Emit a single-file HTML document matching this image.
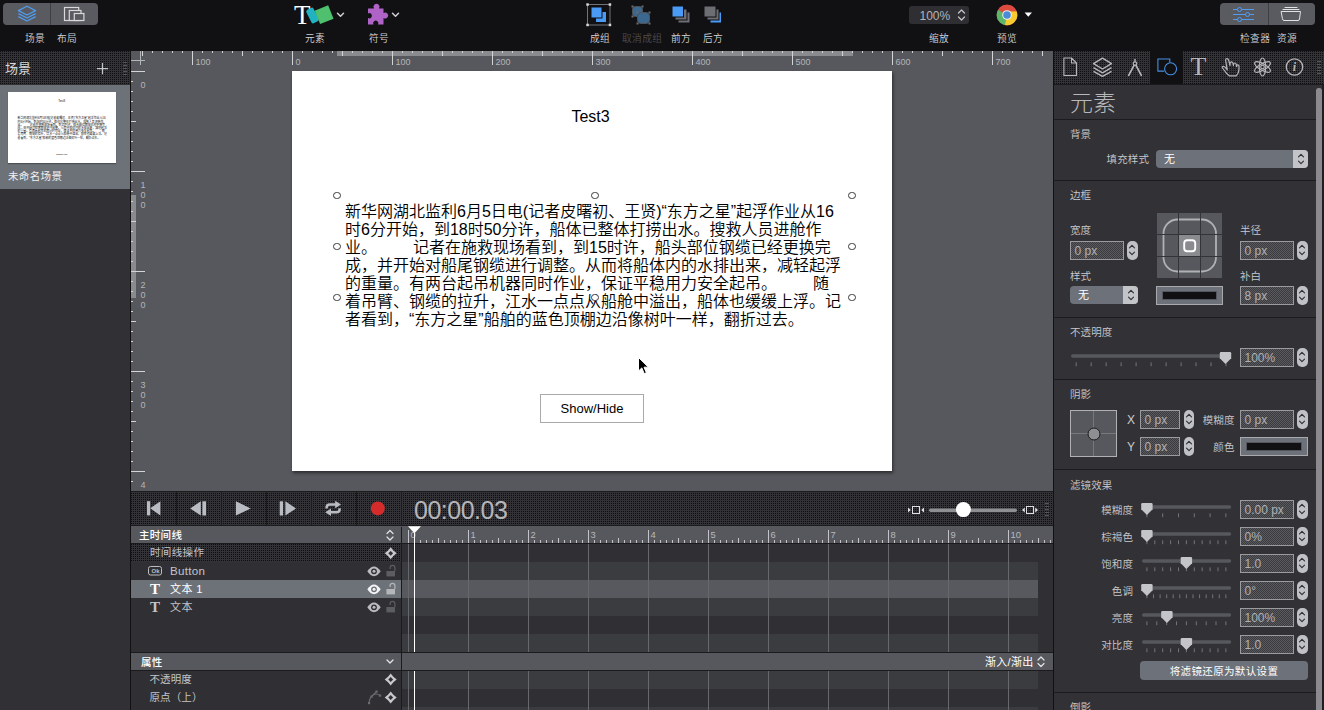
<!DOCTYPE html>
<html lang="zh-CN">
<head>
<meta charset="utf-8">
<title>Hype</title>
<style>
html,body{margin:0;padding:0;}
body{width:1324px;height:710px;overflow:hidden;background:#111114;position:relative;
 font-family:"Liberation Sans","Noto Sans CJK SC",sans-serif;font-size:11px;color:#e6e6e8;}
.a{position:absolute;}
.dot{background-color:#333337;background-image:linear-gradient(90deg,transparent 50%,#333337 50%),linear-gradient(180deg,#0d0d0f 50%,#333337 50%);background-size:2px 2px;}
#toolbar{left:0;top:0;width:1324px;height:51px;background:#111114;}
.seg{background:#5a5b60;border-radius:4px;height:22px;top:3px;}
.tl{font-weight:350;top:32.3px;height:14px;line-height:14px;font-size:9.7px;color:#d4d4d8;white-space:nowrap;letter-spacing:0.4px;}
#left{left:0;top:51px;width:130px;height:659px;background:#313135;}
#lefthead{left:0;top:0;width:130px;height:34px;}
#scene{left:0;top:34px;width:130px;height:104px;background:#6d7279;}
#thumb .btn{border-color:transparent !important;}
#thumb{left:8px;top:7.4px;width:108px;height:71px;background:#fff;box-shadow:0 1px 1px rgba(0,0,0,.3);overflow:hidden;}
#stage{left:131px;top:51px;width:922px;height:440px;background:#57585d;overflow:hidden;}
#doc{left:161px;top:20px;width:600px;height:400px;background:#fff;box-shadow:1px 2px 3px rgba(0,0,0,.5);}
.rl{font-size:9px;color:#b4b5b8;line-height:10px;}
.ln{position:absolute;white-space:nowrap;font-size:16px;line-height:18px;color:#000;left:53px;font-weight:350;}
.ln i{display:inline-block;height:1px;}
.hd{position:absolute;width:5.4px;height:5.4px;border-radius:50%;border:1px solid #3a3a3a;background:#fff;margin:-3.2px 0 0 -3.7px;}
#transport{left:131px;top:491px;width:922px;height:35px;}
.tb{top:1px;width:44px;height:34px;border-right:1px solid #1b1b1e;}
#timeline{left:131px;top:527px;width:922px;height:183px;background:#303034;}
.th{background:#57585d;height:16px;left:0;width:922px;}
.row{left:0;width:270px;height:18px;line-height:18px;font-size:10.5px;color:#c8c8cc;white-space:nowrap;}
#insp{left:1054px;top:51px;width:270px;height:659px;background:#323236;overflow:hidden;}
.lab{font-weight:350;font-size:10.5px;line-height:14px;color:#cacace;white-space:nowrap;letter-spacing:0.1px;}
.sep{left:0;width:262px;height:1px;background:#1c1c1f;}
.inp{height:17px;border:1px solid #9b9ca0;font-size:12px;line-height:18.9px;color:#b0b0b4;padding-left:3.5px;box-sizing:content-box;
 background-color:#4a4b4f;background-image:linear-gradient(45deg,#3b3b3f 25%,transparent 25%,transparent 75%,#3b3b3f 75%),linear-gradient(45deg,#3b3b3f 25%,#5a5b5f 25%,#5a5b5f 75%,#3b3b3f 75%);background-size:2px 2px;background-position:0 0,1px 1px;}
.stp{width:10.5px;height:18.5px;border-radius:5px;background:#bfc1c6;}
.sel{background:#6d7179;border-radius:4px;height:18px;line-height:18px;color:#fff;font-size:11px;}
.well{border:1px solid #a8a9ad;background:#6d7179;box-sizing:border-box;}
.well i{position:absolute;left:5px;top:4px;right:5px;bottom:4px;background:#111114;border:1px solid #54575d;box-sizing:border-box;}
.grip{width:4px;height:1px;background:#55565a;box-shadow:0 3px 0 #55565a,0 6px 0 #55565a,0 9px 0 #55565a,0 12px 0 #55565a;}
</style>
</head>
<body>
<div id="toolbar" class="a">
<div class="a seg" style="left:3px;width:95px;"></div>
<div class="a" style="left:50px;top:3px;width:1px;height:22px;background:#3e3f43;"></div>
<svg class="a" style="left:3px;top:3px" width="95" height="22" viewBox="0 0 95 22">
 <g fill="none" stroke="#4f9cf0" stroke-width="1.2" stroke-linejoin="round">
  <path d="M24 3.2 L32.6 7.6 L24 12 L15.4 7.6 Z"/>
  <path d="M15.4 10.6 L24 15 L32.6 10.6"/>
  <path d="M15.4 13.6 L24 18 L32.6 13.6"/>
 </g>
 <g fill="none" stroke="#d9d9dc" stroke-width="1.2">
  <rect x="61.5" y="4.5" width="14.2" height="13"/>
  <rect x="66.3" y="7.5" width="11.7" height="10" fill="#5a5b60"/>
  <rect x="71.3" y="10.5" width="9.6" height="7" fill="#5a5b60"/>
 </g>
</svg>
<div class="a tl" style="left:25px;">场景</div>
<div class="a tl" style="left:57px;">布局</div>

<div class="a" style="left:294px;top:0px;font-family:'Liberation Serif',serif;font-size:27px;line-height:30px;color:#fff;">T</div>
<svg class="a" style="left:300px;top:0" width="50" height="30" viewBox="0 0 50 30">
 <rect x="8.5" y="8" width="8" height="15" rx="2" fill="#22b3c2" transform="rotate(-27 12.5 15.5)"/>
 <rect x="17" y="7.5" width="14.5" height="14.5" fill="#4fc16e" transform="rotate(-22 24 15)"/>
 <path d="M37.5 13.2 L40.5 16.2 L43.5 13.2" fill="none" stroke="#d0d0d3" stroke-width="1.5" stroke-linecap="round" stroke-linejoin="round"/>
</svg>
<div class="a tl" style="left:305px;">元素</div>

<svg class="a" style="left:366px;top:2px" width="40" height="26" viewBox="0 0 40 26">
 <path d="M2 6.5 H8 A3 3 0 1 1 13 6.5 H17.5 V11 A3 3 0 1 1 17.5 16 V22.5 H12 A2.6 2.6 0 1 0 7.5 22.5 H2 V16 A2.6 2.6 0 1 0 2 11.5 Z" fill="#b063c6"/>
 <path d="M26.5 11.2 L29.5 14.2 L32.5 11.2" fill="none" stroke="#d0d0d3" stroke-width="1.5" stroke-linecap="round" stroke-linejoin="round"/>
</svg>
<div class="a tl" style="left:369px;">符号</div>

<svg class="a" style="left:585px;top:2px" width="140" height="26" viewBox="0 0 140 26">
 <rect x="2.5" y="2.5" width="22.5" height="20.5" fill="none" stroke="#737478" stroke-width="1"/>
 <g fill="#d8d8db"><rect x="1.3" y="1.3" width="2.5" height="2.5"/><rect x="23.7" y="1.3" width="2.5" height="2.5"/><rect x="1.3" y="21.7" width="2.5" height="2.5"/><rect x="23.7" y="21.7" width="2.5" height="2.5"/></g>
 <rect x="10.5" y="9.5" width="11" height="11" fill="#4a9bf5" stroke="#111114" stroke-width="1"/>
 <rect x="6" y="5" width="11" height="11" fill="#4a9bf5" stroke="#111114" stroke-width="1"/>
 <g fill="#3c678f" stroke="#4e5358" stroke-width="1"><rect x="47.5" y="4.5" width="10" height="10" rx="3"/><rect x="52.5" y="10.5" width="12" height="11" rx="3.5"/></g>
 <g fill="#6a6c70"><rect x="46.5" y="3.5" width="2" height="2"/><rect x="56.5" y="3.5" width="2" height="2"/><rect x="46.5" y="13.5" width="2" height="2"/><rect x="51.5" y="9.5" width="2" height="2"/><rect x="63.5" y="9.5" width="2" height="2"/><rect x="51.5" y="20.5" width="2" height="2"/><rect x="63.5" y="20.5" width="2" height="2"/></g>
 <rect x="93" y="10" width="12" height="11" fill="#6d6e73" stroke="#111114" stroke-width="1"/>
 <rect x="90" y="7" width="12" height="11" fill="#6d6e73" stroke="#111114" stroke-width="1"/>
 <rect x="87" y="4" width="11.5" height="11" fill="#4a9bf5" stroke="#111114" stroke-width="1"/>
 <rect x="125" y="10" width="11.5" height="11" fill="#4a9bf5" stroke="#111114" stroke-width="1"/>
 <rect x="122" y="7" width="12" height="11" fill="#6d6e73" stroke="#111114" stroke-width="1"/>
 <rect x="119" y="4" width="12" height="11" fill="#6d6e73" stroke="#111114" stroke-width="1"/>
</svg>
<div class="a tl" style="left:590px;">成组</div>
<div class="a tl" style="left:622px;color:#4c4c51;">取消成组</div>
<div class="a tl" style="left:671px;">前方</div>
<div class="a tl" style="left:703px;">后方</div>

<div class="a" style="left:909px;top:6px;width:60px;height:18px;border-radius:3px;background:#2e2e33;"></div>
<div class="a" style="left:919.5px;top:6.7px;height:18px;line-height:18px;font-size:12px;color:#b4b4b8;">100%</div>
<svg class="a" style="left:956px;top:7px" width="12" height="16" viewBox="0 0 12 16"><path d="M2.5 6 L5.5 3 L8.5 6 M2.5 10 L5.5 13 L8.5 10" fill="none" stroke="#c4c4c8" stroke-width="1.3" stroke-linecap="round" stroke-linejoin="round"/></svg>
<div class="a tl" style="left:929px;">缩放</div>

<svg class="a" style="left:996px;top:4px" width="40" height="22" viewBox="0 0 40 22">
 <circle cx="11" cy="11" r="10.3" fill="#dd4b3e"/>
 <path d="M11 11 L2.1 5.8 A10.3 10.3 0 0 0 9 21.1 L14 13.5 Z" fill="#5cb76b"/>
 <path d="M11 11 L9 21.1 A10.3 10.3 0 0 0 20.6 7.3 L11 7.3 Z" fill="#f7cb2f"/>
 <path d="M11 11 L2.1 5.8 A10.3 10.3 0 0 1 20.6 7.3 L11 7.3 Z" fill="#dd4b3e"/>
 <circle cx="11" cy="11" r="4.8" fill="#f1f1f1"/>
 <circle cx="11" cy="11" r="3.8" fill="#4a8bd8"/>
 <path d="M28.6 8.6 H36 L32.3 12.8 Z" fill="#fff"/>
</svg>
<div class="a tl" style="left:997px;">预览</div>

<div class="a seg" style="left:1220px;width:95px;"></div>
<div class="a" style="left:1268px;top:3px;width:1px;height:22px;background:#3e3f43;"></div>
<svg class="a" style="left:1220px;top:3px" width="95" height="22" viewBox="0 0 95 22">
 <g stroke="#4f9cf0" stroke-width="1" fill="#5a5b60">
  <path d="M13 6.5 H34 M13 11.5 H34 M13 16.5 H34" fill="none"/>
  <circle cx="19.5" cy="6.5" r="2"/><circle cx="27.5" cy="11.5" r="2"/><circle cx="19.5" cy="16.5" r="2"/>
 </g>
 <g stroke="#e2e2e5" stroke-width="1" fill="none" stroke-linecap="round">
  <path d="M65 4.5 H77 M63 6.5 H79"/>
  <path d="M61.5 8.5 H80.5 L79.5 16 Q79.3 17.5 78 17.5 H64 Q62.7 17.5 62.5 16 Z"/>
 </g>
</svg>
<div class="a tl" style="left:1240px;">检查器</div>
<div class="a tl" style="left:1277px;">资源</div>
</div>
<div id="left" class="a">
<div id="lefthead" class="a dot">
 <div class="a" style="left:5px;top:9px;font-size:13px;line-height:18px;color:#d6d6d9;">场景</div>
 <svg class="a" style="left:96px;top:11px" width="13" height="13" viewBox="0 0 13 13"><path d="M6.5 1 V12.2 M0.9 6.600 H12.1" stroke="#c4c8cc" stroke-width="1.1" fill="none"/></svg>
 <div class="a grip" style="left:123px;top:11px;"></div>
</div>
<div id="scene" class="a">
 <div id="thumb" class="a"><div class="a" style="left:0;top:0.8px;width:600px;height:400px;transform:scale(0.18);transform-origin:0 0;"><div class="a" style="left:0;width:600px;top:37.2px;text-align:center;font-size:16px;line-height:18px;color:#000;margin-left:-1.5px;">Test3</div><div class="ln" style="top:132.2px;">新华网湖北监利6月5日电(记者皮曙初、王贤)“东方之星”起浮作业从16</div><div class="ln" style="top:150.2px;">时6分开始，到18时50分许，船体已整体打捞出水。搜救人员进舱作</div><div class="ln" style="top:168.2px;">业。<i style="width:36px"></i>记者在施救现场看到，到15时许，船头部位钢缆已经更换完</div><div class="ln" style="top:186.2px;">成，并开始对船尾钢缆进行调整。从而将船体内的水排出来，减轻起浮</div><div class="ln" style="top:204.2px;">的重量。有两台起吊机器同时作业，保证平稳用力安全起吊。<i style="width:36px"></i>随</div><div class="ln" style="top:222.2px;">着吊臂、钢缆的拉升，江水一点点从船舱中溢出，船体也缓缓上浮。记</div><div class="ln" style="top:240.2px;">者看到，“东方之星”船舶的蓝色顶棚边沿像树叶一样，翻折过去。</div><div class="a btn" style="left:248px;top:323px;width:102px;height:27px;border:1px solid #a9a9a9;text-align:center;font-size:13px;line-height:27px;color:#000;">Show/Hide</div></div></div>
 <div class="a" style="left:8px;top:84px;font-size:10.5px;line-height:14px;color:#f0f0f2;letter-spacing:0.35px;">未命名场景</div>
</div>
</div>
<div id="stage" class="a">
<div class="a" style="left:206px;top:0;width:516px;height:5px;background:#8a8b8f;"></div>
<div class="a" style="left:0;top:144px;width:5px;height:103px;background:#8a8b8f;"></div>
<svg class="a" style="left:0;top:0" width="922" height="440" viewBox="0 0 922 440" shape-rendering="crispEdges"><path d="M11.5 0V5M21.5 0V2M31.5 0V2M41.5 0V2M51.5 0V2M61.5 0V14M71.5 0V2M81.5 0V2M91.5 0V2M101.5 0V2M111.5 0V5M121.5 0V2M131.5 0V2M141.5 0V2M151.5 0V2M161.5 0V14M171.5 0V2M181.5 0V2M191.5 0V2M201.5 0V2M211.5 0V5M221.5 0V2M231.5 0V2M241.5 0V2M251.5 0V2M261.5 0V14M271.5 0V2M281.5 0V2M291.5 0V2M301.5 0V2M311.5 0V5M321.5 0V2M331.5 0V2M341.5 0V2M351.5 0V2M361.5 0V14M371.5 0V2M381.5 0V2M391.5 0V2M401.5 0V2M411.5 0V5M421.5 0V2M431.5 0V2M441.5 0V2M451.5 0V2M461.5 0V14M471.5 0V2M481.5 0V2M491.5 0V2M501.5 0V2M511.5 0V5M521.5 0V2M531.5 0V2M541.5 0V2M551.5 0V2M561.5 0V14M571.5 0V2M581.5 0V2M591.5 0V2M601.5 0V2M611.5 0V5M621.5 0V2M631.5 0V2M641.5 0V2M651.5 0V2M661.5 0V14M671.5 0V2M681.5 0V2M691.5 0V2M701.5 0V2M711.5 0V5M721.5 0V2M731.5 0V2M741.5 0V2M751.5 0V2M761.5 0V14M771.5 0V2M781.5 0V2M791.5 0V2M801.5 0V2M811.5 0V5M821.5 0V2M831.5 0V2M841.5 0V2M851.5 0V2M861.5 0V14M871.5 0V2M881.5 0V2M891.5 0V2M901.5 0V2M911.5 0V5" stroke="#d4d4d7" stroke-width="1" fill="none"/><path d="M0 20.5H14M0 30.5H2M0 40.5H2M0 50.5H2M0 60.5H2M0 70.5H5M0 80.5H2M0 90.5H2M0 100.5H2M0 110.5H2M0 120.5H14M0 130.5H2M0 140.5H2M0 150.5H2M0 160.5H2M0 170.5H5M0 180.5H2M0 190.5H2M0 200.5H2M0 210.5H2M0 220.5H14M0 230.5H2M0 240.5H2M0 250.5H2M0 260.5H2M0 270.5H5M0 280.5H2M0 290.5H2M0 300.5H2M0 310.5H2M0 320.5H14M0 330.5H2M0 340.5H2M0 350.5H2M0 360.5H2M0 370.5H5M0 380.5H2M0 390.5H2M0 400.5H2M0 410.5H2M0 420.5H14M0 430.5H2" stroke="#d4d4d7" stroke-width="1" fill="none"/><path d="M9.5 0V14M0 9.5H14" stroke="#b4b5b9" stroke-width="1" fill="none"/></svg>
<div class="a rl" style="left:64.4px;top:6.3px;">100</div>
<div class="a rl" style="left:164.4px;top:6.3px;">0</div>
<div class="a rl" style="left:264.4px;top:6.3px;">100</div>
<div class="a rl" style="left:364.4px;top:6.3px;">200</div>
<div class="a rl" style="left:464.4px;top:6.3px;">300</div>
<div class="a rl" style="left:564.4px;top:6.3px;">400</div>
<div class="a rl" style="left:664.4px;top:6.3px;">500</div>
<div class="a rl" style="left:764.4px;top:6.3px;">600</div>
<div class="a rl" style="left:864.4px;top:6.3px;">700</div>
<div class="a rl" style="left:9px;top:28.8px;width:6px;text-align:center;">0</div>
<div class="a rl" style="left:9px;top:128.8px;width:6px;text-align:center;">1<br>0<br>0</div>
<div class="a rl" style="left:9px;top:228.8px;width:6px;text-align:center;">2<br>0<br>0</div>
<div class="a rl" style="left:9px;top:328.8px;width:6px;text-align:center;">3<br>0<br>0</div>
<div class="a rl" style="left:9px;top:428.8px;width:6px;text-align:center;">4<br>0<br>0</div>
<div id="doc" class="a"><div class="a" style="left:0;width:600px;top:37.2px;text-align:center;font-size:16px;line-height:18px;color:#000;margin-left:-1.5px;">Test3</div><div class="ln" style="top:132.2px;">新华网湖北监利6月5日电(记者皮曙初、王贤)“东方之星”起浮作业从16</div><div class="ln" style="top:150.2px;">时6分开始，到18时50分许，船体已整体打捞出水。搜救人员进舱作</div><div class="ln" style="top:168.2px;">业。<i style="width:36px"></i>记者在施救现场看到，到15时许，船头部位钢缆已经更换完</div><div class="ln" style="top:186.2px;">成，并开始对船尾钢缆进行调整。从而将船体内的水排出来，减轻起浮</div><div class="ln" style="top:204.2px;">的重量。有两台起吊机器同时作业，保证平稳用力安全起吊。<i style="width:36px"></i>随</div><div class="ln" style="top:222.2px;">着吊臂、钢缆的拉升，江水一点点从船舱中溢出，船体也缓缓上浮。记</div><div class="ln" style="top:240.2px;">者看到，“东方之星”船舶的蓝色顶棚边沿像树叶一样，翻折过去。</div><div class="a btn" style="left:248px;top:323px;width:102px;height:27px;border:1px solid #a9a9a9;text-align:center;font-size:13px;line-height:27px;color:#000;">Show/Hide</div><div class="hd" style="left:45px;top:124px;"></div><div class="hd" style="left:303px;top:124px;"></div><div class="hd" style="left:560px;top:124px;"></div><div class="hd" style="left:45px;top:175px;"></div><div class="hd" style="left:560px;top:175px;"></div><div class="hd" style="left:45px;top:226px;"></div><div class="hd" style="left:303px;top:226px;"></div><div class="hd" style="left:560px;top:226px;"></div><svg class="a" style="left:345px;top:285px" width="14" height="20" viewBox="0 0 14 20"><path d="M1.5 1.5 V15 L4.8 11.9 L7.2 17.6 L9.4 16.7 L7 11.2 H11.4 Z" fill="#000" stroke="#fff" stroke-width="1"/></svg></div>
</div>
<div id="transport" class="a dot">
<div class="a" style="left:0;top:0;width:922px;height:1px;background:#1b1b1e;"></div>
<div class="a" style="left:0;top:34.3px;width:922px;height:1px;background:#1b1b1e;"></div>
<div class="a tb" style="left:1.4px;"></div>
<div class="a tb" style="left:46.4px;"></div>
<div class="a tb" style="left:91.4px;"></div>
<div class="a tb" style="left:136.4px;"></div>
<div class="a tb" style="left:181.4px;"></div>
<div class="a tb" style="left:226.4px;"></div>
<svg class="a" style="left:0;top:0.4px" width="270" height="34" viewBox="0 0 270 34">
 <g fill="#b9bdc3">
  <rect x="16" y="10.2" width="3.2" height="14.2"/><path d="M29.4 10.2 V24.4 L19.2 17.3 Z"/>
  <path d="M69.8 10.3 V24.5 L59.2 17.4 Z"/><rect x="71.4" y="10.3" width="3.6" height="14.2"/>
  <path d="M104.9 10.3 V24.5 L119.7 17.4 Z"/>
  <rect x="148.7" y="10.3" width="3.4" height="14.2"/><path d="M154.4 10.3 V24.5 L165 17.4 Z"/>
 </g>
 <g fill="none" stroke="#b9bdc3" stroke-width="2.5" stroke-linecap="butt">
  <path d="M195.6 17.6 V16.6 Q195.600 13.5 198.8 13.500 H205"/>
  <path d="M208.6 17.2 V18.200 Q208.600 21.300 205.400 21.300 H199.2"/>
 </g>
 <g fill="#b9bdc3"><path d="M204.2 9.700 L210 13.5 L204.200 17.300 Z"/><path d="M200 17.500 L194.200 21.300 L200 25.100 Z"/></g>
 <circle cx="246.8" cy="17.4" r="7" fill="#d62b2b"/>
</svg>
<div class="a" style="left:283px;top:3px;font-size:25px;line-height:32px;color:#b6b6ba;letter-spacing:-0.5px;">00:00.03</div>
<svg class="a" style="left:775px;top:10px" width="136" height="18" viewBox="0 0 136 18">
 <rect x="6.5" y="5.5" width="7" height="7" fill="none" stroke="#e0e0e3" stroke-width="1"/>
 <path d="M2 6.5 L4.8 9 L2 11.5 Z M18 6.5 L15.2 9 L18 11.5 Z" fill="#e0e0e3"/>
 <rect x="23" y="7.5" width="88" height="3.5" rx="1.7" fill="#8e8f93"/>
 <circle cx="57.4" cy="8.6" r="7.5" fill="#fff"/>
 <rect x="120.5" y="5.5" width="7" height="7" fill="none" stroke="#e0e0e3" stroke-width="1"/>
 <path d="M118.8 6.5 L116 9 L118.8 11.5 Z M129.200 6.5 L132 9 L129.2 11.5 Z" fill="#e0e0e3"/>
</svg>
<div class="a grip" style="left:914px;top:12px;"></div>
</div>
<div id="timeline" class="a">
<div class="a" style="left:271px;top:35px;width:636px;height:18px;background:#3b3c40;"></div>
<div class="a" style="left:271px;top:53px;width:636px;height:18px;background:#58595e;"></div>
<div class="a" style="left:271px;top:71px;width:636px;height:18px;background:#3b3c40;"></div>
<div class="a" style="left:271px;top:107px;width:636px;height:18px;background:#3b3c40;"></div>
<div class="a" style="left:271px;top:144px;width:636px;height:18px;background:#3b3c40;"></div>
<div class="a" style="left:271px;top:180px;width:636px;height:4px;background:#3b3c40;"></div>
<div class="a th" style="top:-0.7px;height:16.7px;"></div>
<div class="a th" style="top:126px;height:17px;"></div>
<div class="a" style="left:0;top:16px;width:922px;height:1px;background:#1b1b1e;"></div>
<div class="a" style="left:0;top:125px;width:922px;height:1px;background:#1b1b1e;"></div>
<div class="a" style="left:0;top:143px;width:922px;height:1px;background:#1b1b1e;"></div>
<div class="a dot" style="left:0;top:17px;width:270px;height:18px;"></div>
<div class="a" style="left:0;top:53px;width:270px;height:18px;background:#6d7279;"></div>
<div class="a" style="left:270px;top:0;width:1px;height:183px;background:#1b1b1e;"></div>
<div class="a row" style="top:-1px;left:8px;color:#fff;font-weight:500;letter-spacing:0.3px;">主时间线</div>
<div class="a row" style="top:16px;left:19px;color:#c4c4c8;letter-spacing:0.35px;">时间线操作</div>
<div class="a row" style="top:35px;left:39px;font-size:11.6px;color:#c4c4c8;letter-spacing:0.3px;">Button</div>
<div class="a row" style="top:53px;left:39px;color:#fff;letter-spacing:0.4px;font-size:11px;">文本 1</div>
<div class="a row" style="top:71px;left:39px;color:#c4c4c8;letter-spacing:0.4px;font-size:11px;">文本</div>
<div class="a row" style="top:125.5px;left:10px;color:#fff;font-weight:500;letter-spacing:0.2px;">属性</div>
<div class="a row" style="top:142.8px;left:18.5px;color:#c4c4c8;letter-spacing:0.1px;">不透明度</div>
<div class="a row" style="top:160.8px;left:18.5px;color:#c4c4c8;letter-spacing:0.1px;">原点（上）</div>
<svg class="a" style="left:0;top:0" width="270" height="183" viewBox="0 0 270 183"><path d="M256 6.5 L259 3.5 L262 6.5 M256 10 L259 13 L262 10" fill="none" stroke="#e4e4e6" stroke-width="1.2" stroke-linecap="round" stroke-linejoin="round"/><g transform="translate(259.7,26.3)"><path d="M0 -6 L2.7 -2.7 L6 0 L2.7 2.7 L0 6 L-2.7 2.7 L-6 0 L-2.7 -2.7 Z" fill="#c9c9cc"/><path d="M0 -2.400 L2.400 0 L0 2.400 L-2.400 0 Z" fill="#303034"/></g><g transform="translate(243,44.3)"><path d="M-6.7 0 Q-3.5 -4.9 0 -4.9 Q3.5 -4.9 6.7 0 Q3.5 4.9 0 4.9 Q-3.5 4.9 -6.7 0 Z" fill="#bdbdc0"/><circle r="2.9" fill="#303034"/><circle r="1.5" fill="#bdbdc0"/></g><g transform="translate(259.7,44)"><rect x="-4.3" y="0" width="8.6" height="5.4" fill="#5c5d61"/><path d="M-0.6 -2 V-3.2 A2.4 2.4 0 0 1 4.200 -3.2 V0" fill="none" stroke="#5c5d61" stroke-width="1.2"/></g><g transform="translate(243,62.3)"><path d="M-6.7 0 Q-3.5 -4.9 0 -4.9 Q3.5 -4.9 6.7 0 Q3.5 4.9 0 4.9 Q-3.5 4.9 -6.7 0 Z" fill="#f4f4f6"/><circle r="2.9" fill="#6d7279"/><circle r="1.5" fill="#f4f4f6"/></g><g transform="translate(259.7,62)"><rect x="-4.3" y="0" width="8.6" height="5.4" fill="#b4b6ba"/><path d="M-0.6 -2 V-3.2 A2.4 2.4 0 0 1 4.200 -3.2 V0" fill="none" stroke="#b4b6ba" stroke-width="1.2"/></g><g transform="translate(243,80.3)"><path d="M-6.7 0 Q-3.5 -4.9 0 -4.9 Q3.5 -4.9 6.7 0 Q3.5 4.9 0 4.9 Q-3.5 4.9 -6.7 0 Z" fill="#bdbdc0"/><circle r="2.9" fill="#303034"/><circle r="1.5" fill="#bdbdc0"/></g><g transform="translate(259.7,80)"><rect x="-4.3" y="0" width="8.6" height="5.4" fill="#5c5d61"/><path d="M-0.6 -2 V-3.2 A2.4 2.4 0 0 1 4.200 -3.2 V0" fill="none" stroke="#5c5d61" stroke-width="1.2"/></g><path d="M256 133 L259 136 L262 133" fill="none" stroke="#e4e4e6" stroke-width="1.3" stroke-linecap="round" stroke-linejoin="round"/><g transform="translate(259.7,152.5)"><path d="M0 -6 L2.7 -2.7 L6 0 L2.7 2.7 L0 6 L-2.7 2.7 L-6 0 L-2.7 -2.7 Z" fill="#c9c9cc"/><path d="M0 -2.400 L2.400 0 L0 2.400 L-2.400 0 Z" fill="#303034"/></g><g transform="translate(259.7,170.5)"><path d="M0 -6 L2.7 -2.7 L6 0 L2.7 2.7 L0 6 L-2.7 2.7 L-6 0 L-2.7 -2.7 Z" fill="#c9c9cc"/><path d="M0 -2.400 L2.400 0 L0 2.400 L-2.400 0 Z" fill="#303034"/></g><path d="M238 176 Q238.5 170 243 167.5 Q246 166 249 168.5 M240.5 169.5 L245.5 164.5" fill="none" stroke="#6a6b6f" stroke-width="1.1"/><g fill="#6a6b6f"><rect x="237" y="175" width="2.2" height="2.2"/><rect x="239.5" y="168.5" width="2.2" height="2.2"/><rect x="244.5" y="163.5" width="2.2" height="2.2"/><rect x="248" y="167.5" width="2.2" height="2.2"/></g><rect x="17.5" y="39.5" width="13" height="8.5" rx="2" fill="none" stroke="#bdbdc0" stroke-width="1"/></svg>
<div class="a" style="left:19px;top:40px;font-size:6px;line-height:8px;color:#bdbdc0;width:11px;text-align:center;font-weight:bold;">Ok</div>
<div class="a" style="left:19px;top:53px;font-family:'Liberation Serif',serif;font-weight:bold;font-size:15px;line-height:18px;color:#fff;">T</div>
<div class="a" style="left:19px;top:71px;font-family:'Liberation Serif',serif;font-weight:bold;font-size:15px;line-height:18px;color:#c4c4c8;">T</div>
<svg class="a" style="left:271px;top:0" width="651" height="183" viewBox="0 0 651 183" shape-rendering="crispEdges"><path d="M6.5 17V125M6.5 144V183M66.5 17V125M66.5 144V183M126.5 17V125M126.5 144V183M186.5 17V125M186.5 144V183M246.5 17V125M246.5 144V183M306.5 17V125M306.5 144V183M366.5 17V125M366.5 144V183M426.5 17V125M426.5 144V183M486.5 17V125M486.5 144V183M546.5 17V125M546.5 144V183M606.5 17V125M606.5 144V183" stroke="#67686c" stroke-width="1" fill="none"/><path d="M6.5 3V16M66.5 3V16M126.5 3V16M186.5 3V16M246.5 3V16M306.5 3V16M366.5 3V16M426.5 3V16M486.5 3V16M546.5 3V16M606.5 3V16" stroke="#c4c4c8" stroke-width="1" fill="none"/><path d="M12.5 13V16M18.5 13V16M24.5 13V16M30.5 13V16M36.5 11V16M42.5 13V16M48.5 13V16M54.5 13V16M60.5 13V16M72.5 13V16M78.5 13V16M84.5 13V16M90.5 13V16M96.5 11V16M102.5 13V16M108.5 13V16M114.5 13V16M120.5 13V16M132.5 13V16M138.5 13V16M144.5 13V16M150.5 13V16M156.5 11V16M162.5 13V16M168.5 13V16M174.5 13V16M180.5 13V16M192.5 13V16M198.5 13V16M204.5 13V16M210.5 13V16M216.5 11V16M222.5 13V16M228.5 13V16M234.5 13V16M240.5 13V16M252.5 13V16M258.5 13V16M264.5 13V16M270.5 13V16M276.5 11V16M282.5 13V16M288.5 13V16M294.5 13V16M300.5 13V16M312.5 13V16M318.5 13V16M324.5 13V16M330.5 13V16M336.5 11V16M342.5 13V16M348.5 13V16M354.5 13V16M360.5 13V16M372.5 13V16M378.5 13V16M384.5 13V16M390.5 13V16M396.5 11V16M402.5 13V16M408.5 13V16M414.5 13V16M420.5 13V16M432.5 13V16M438.5 13V16M444.5 13V16M450.5 13V16M456.5 11V16M462.5 13V16M468.5 13V16M474.5 13V16M480.5 13V16M492.5 13V16M498.5 13V16M504.5 13V16M510.5 13V16M516.5 11V16M522.5 13V16M528.5 13V16M534.5 13V16M540.5 13V16M552.5 13V16M558.5 13V16M564.5 13V16M570.5 13V16M576.5 11V16M582.5 13V16M588.5 13V16M594.5 13V16M600.5 13V16M612.5 13V16M618.5 13V16M624.5 13V16M630.5 13V16M636.5 11V16M642.5 13V16M648.5 13V16" stroke="#c4c4c8" stroke-width="1" fill="none"/></svg>
<div class="a" style="left:279.5px;top:2.8px;font-size:9.4px;line-height:10px;color:#b8b9bc;">0</div>
<div class="a" style="left:339.5px;top:2.8px;font-size:9.4px;line-height:10px;color:#b8b9bc;">1</div>
<div class="a" style="left:399.5px;top:2.8px;font-size:9.4px;line-height:10px;color:#b8b9bc;">2</div>
<div class="a" style="left:459.5px;top:2.8px;font-size:9.4px;line-height:10px;color:#b8b9bc;">3</div>
<div class="a" style="left:519.5px;top:2.8px;font-size:9.4px;line-height:10px;color:#b8b9bc;">4</div>
<div class="a" style="left:579.5px;top:2.8px;font-size:9.4px;line-height:10px;color:#b8b9bc;">5</div>
<div class="a" style="left:639.5px;top:2.8px;font-size:9.4px;line-height:10px;color:#b8b9bc;">6</div>
<div class="a" style="left:699.5px;top:2.8px;font-size:9.4px;line-height:10px;color:#b8b9bc;">7</div>
<div class="a" style="left:759.5px;top:2.8px;font-size:9.4px;line-height:10px;color:#b8b9bc;">8</div>
<div class="a" style="left:819.5px;top:2.8px;font-size:9.4px;line-height:10px;color:#b8b9bc;">9</div>
<div class="a" style="left:879.5px;top:2.8px;font-size:9.4px;line-height:10px;color:#b8b9bc;">10</div>
<div class="a" style="left:282.5px;top:6px;width:1.5px;height:119px;background:#fff;"></div>
<div class="a" style="left:282.5px;top:144px;width:1.5px;height:39px;background:#fff;"></div>
<svg class="a" style="left:276px;top:-1px" width="15" height="9" viewBox="0 0 15 9"><path d="M0.9 0.2 H14 L7.45 7.3 Z" fill="#fff"/></svg>
<div class="a row" style="top:126px;left:854px;width:auto;color:#fff;letter-spacing:0.3px;font-size:11px;">渐入/渐出</div>
<svg class="a" style="left:905px;top:128px" width="10" height="14" viewBox="0 0 10 14"><path d="M2 5 L5 2 L8 5 M2 8.5 L5 11.5 L8 8.5" fill="none" stroke="#e4e4e6" stroke-width="1.2" stroke-linecap="round" stroke-linejoin="round"/></svg>
</div>
<div id="insp" class="a">
<div class="a dot" style="left:0;top:0;width:270px;height:33px;"></div>
<div class="a" style="left:96px;top:0;width:33px;height:33px;background:#111114;"></div>
<div class="a" style="left:0;top:33px;width:270px;height:1px;background:#1b1b1e;"></div>
<svg class="a" style="left:0;top:0" width="270" height="33" viewBox="0 0 270 33">
 <path d="M9.9 7 H17.5 L22.5 12 V24.5 H9.9 Z M17.5 7 V12 H22.5" fill="none" stroke="#b6b6ba" stroke-width="1.1" stroke-linejoin="round"/>
 <g fill="none" stroke="#b6b6ba" stroke-width="1.4" stroke-linejoin="round"><path d="M48.5 7.2 L57.5 12.6 L48.5 18 L39.5 12.6 Z"/><path d="M39.5 16.6 L48.5 21.8 L57.5 16.6"/><path d="M39.500 20.3 L48.5 25.4 L57.500 20.3"/></g>
 <g fill="none" stroke="#b6b6ba" stroke-linecap="round"><path d="M81 8.3 V10.5" stroke-width="1.3"/><circle cx="81" cy="12.6" r="1.8" stroke-width="1.2"/><path d="M80 14.3 L74.700 24.3 M82 14.3 L87.3 24.3" stroke-width="1.7"/></g>
 <g fill="none" stroke="#448fe2" stroke-width="1.1"><path d="M110.2 20.1 H103.9 V8 H115.8 V11.6"/><circle cx="116.6" cy="17.8" r="6"/></g>
 <path d="M175.5 24.9 Q172.5 23 170.8 20 L168.5 17 Q167.8 15.5 169.2 15.3 Q170.4 15.2 171.5 16.6 L173.3 18.8 L171.6 9.4 Q171.4 7.8 172.8 7.6 Q174.2 7.5 174.6 9 L176 14.5 Q175.8 11.2 177.2 10.9 Q178.6 10.7 179 12.5 L179.4 14.6 Q179.4 12.200 180.6 12 Q182 11.9 182.3 13.6 L182.6 15.6 Q182.8 13.6 183.9 13.8 Q185 14 185 15.6 L184.9 19 Q184.7 22.5 182.200 24.9 Z" fill="none" stroke="#b6b6ba" stroke-width="1.2" stroke-linejoin="round"/>
 <g fill="none" stroke="#b6b6ba" stroke-width="1.2"><ellipse cx="208.5" cy="16" rx="3.2" ry="9"/><ellipse cx="208.5" cy="16" rx="3.2" ry="9" transform="rotate(60 208.5 16)"/><ellipse cx="208.5" cy="16" rx="3.2" ry="9" transform="rotate(-60 208.5 16)"/><circle cx="208.5" cy="16" r="1.8" fill="#2a2a2e"/></g>
 <circle cx="240.5" cy="16" r="8.2" fill="none" stroke="#b6b6ba" stroke-width="1.3"/>
</svg>
<div class="a" style="left:135.5px;top:0.5px;width:18px;text-align:center;font-family:'Liberation Serif',serif;font-size:26px;line-height:30px;color:#b6b6ba;">T</div>
<div class="a" style="left:235.5px;top:8.5px;width:10px;text-align:center;font-family:'Liberation Serif',serif;font-style:italic;font-weight:bold;font-size:12px;line-height:15px;color:#b6b6ba;">i</div>
<div class="a grip" style="left:263px;top:10px;"></div>
<div class="a" style="left:16px;top:36px;font-size:23px;line-height:32px;color:#b8b8bb;font-weight:300;">元素</div>
<div class="a sep" style="top:68px;"></div>
<div class="a" style="left:262px;top:37px;width:5.5px;height:640px;border-radius:2.7px;background:#8b8b8f;"></div>
<div class="a" style="left:268px;top:34px;width:2px;height:630px;background:#1f1f22;"></div>
<div class="a lab" style="left:16px;top:76px;">背景</div>
<div class="a lab" style="left:15px;width:80px;text-align:right;top:101px;">填充样式</div>
<div class="a sel" style="left:102px;top:99px;width:152px;"><span style="padding-left:8px;">无</span><div class="a" style="right:0;top:0;width:15px;height:18px;border-radius:0 4px 4px 0;background:#c3c4c8;"></div><svg class="a" style="right:2.5px;top:0" width="10" height="18" viewBox="0 0 10 18"><path d="M2.5 6.8 L5 4.3 L7.5 6.8 M2.5 11.2 L5 13.7 L7.5 11.2" fill="none" stroke="#2e2e32" stroke-width="1.1" stroke-linecap="round" stroke-linejoin="round"/></svg></div>
<div class="a sep" style="top:129px;"></div>
<div class="a lab" style="left:16px;top:137px;">边框</div>
<div class="a lab" style="left:16px;top:172px;">宽度</div>
<div class="a inp" style="left:16px;top:190px;width:48.5px;">0 px</div>
<div class="a stp" style="left:73px;top:190px;"><svg width="10" height="18" viewBox="0 0 10 18" style="display:block"><path d="M2.5 6.8 L5 4.3 L7.5 6.8 M2.5 11.2 L5 13.7 L7.5 11.2" fill="none" stroke="#2e2e32" stroke-width="1.1" stroke-linecap="round" stroke-linejoin="round"/></svg></div>
<div class="a lab" style="left:16px;top:218px;">样式</div>
<div class="a sel" style="left:16px;top:235px;width:68px;"><span style="padding-left:8px;">无</span><div class="a" style="right:0;top:0;width:15px;height:18px;border-radius:0 4px 4px 0;background:#c3c4c8;"></div><svg class="a" style="right:2.5px;top:0" width="10" height="18" viewBox="0 0 10 18"><path d="M2.5 6.8 L5 4.3 L7.5 6.8 M2.5 11.2 L5 13.7 L7.5 11.2" fill="none" stroke="#2e2e32" stroke-width="1.1" stroke-linecap="round" stroke-linejoin="round"/></svg></div>
<svg class="a" style="left:103px;top:162px" width="65" height="65" viewBox="0 0 65 65">
 <rect width="65" height="65" fill="#57585d"/>
 <rect x="22" y="22" width="21" height="21" fill="#8a8b8f"/>
 <rect x="6.500" y="6.5" width="52.5" height="52" rx="14" fill="none" stroke="#b0b1b5" stroke-width="1.8"/>
 <path d="M21.5 0V65M43.500 0V65M0 21.5H65M0 43.5H65" stroke="#333338" stroke-width="1" fill="none"/>
 <rect x="27.2" y="27.2" width="11" height="11" rx="3" fill="none" stroke="#fff" stroke-width="1.9"/>
</svg>
<div class="a well" style="left:102px;top:235px;width:67px;height:19px;"><i></i></div>
<div class="a lab" style="left:186px;top:172px;">半径</div>
<div class="a inp" style="left:186px;top:190px;width:48.5px;">0 px</div>
<div class="a stp" style="left:243px;top:190px;"><svg width="10" height="18" viewBox="0 0 10 18" style="display:block"><path d="M2.5 6.8 L5 4.3 L7.5 6.8 M2.5 11.2 L5 13.7 L7.5 11.2" fill="none" stroke="#2e2e32" stroke-width="1.1" stroke-linecap="round" stroke-linejoin="round"/></svg></div>
<div class="a lab" style="left:186px;top:218px;">补白</div>
<div class="a inp" style="left:186px;top:235px;width:48.5px;">8 px</div>
<div class="a stp" style="left:243px;top:235px;"><svg width="10" height="18" viewBox="0 0 10 18" style="display:block"><path d="M2.5 6.8 L5 4.3 L7.5 6.8 M2.5 11.2 L5 13.7 L7.5 11.2" fill="none" stroke="#2e2e32" stroke-width="1.1" stroke-linecap="round" stroke-linejoin="round"/></svg></div>
<div class="a sep" style="top:266px;"></div>
<div class="a lab" style="left:16px;top:274px;">不透明度</div>
<svg class="a" style="left:9px;top:296.7px" width="172" height="22" viewBox="0 0 172 22"><rect x="8" y="6.3" width="156" height="3.4" rx="1.7" fill="#57585d"/><path d="M13.2 14.4V18.2M28.2 14.4V18.2M43.2 14.4V18.2M58.1 14.4V18.2M73.1 14.4V18.2M88.1 14.4V18.2M103.1 14.4V18.2M118.1 14.4V18.2M133.0 14.4V18.2M148.0 14.4V18.2M163.0 14.4V18.2" stroke="#75767a" stroke-width="1" fill="none"/><path d="M156.8 5.2 Q156.8 4 158.0 4 H167.0 Q168.2 4 168.2 5.2 V10.3 L162.5 16 L156.8 10.3 Z" fill="#c4c5c9"/></svg>
<div class="a inp" style="left:186px;top:297px;width:48.5px;">100%</div>
<div class="a stp" style="left:243px;top:297px;"><svg width="10" height="18" viewBox="0 0 10 18" style="display:block"><path d="M2.5 6.8 L5 4.3 L7.5 6.8 M2.5 11.2 L5 13.7 L7.5 11.2" fill="none" stroke="#2e2e32" stroke-width="1.1" stroke-linecap="round" stroke-linejoin="round"/></svg></div>
<div class="a sep" style="top:328px;"></div>
<div class="a lab" style="left:16px;top:336px;">阴影</div>
<svg class="a" style="left:16px;top:359px" width="47" height="47" viewBox="0 0 47 47">
 <rect x="0.5" y="0.5" width="46" height="46" fill="#57585d" stroke="#b0b1b5"/>
 <path d="M23.5 1V46M1 23.500H46" stroke="#77787c" stroke-width="1" fill="none"/>
 <circle cx="24" cy="24" r="6" fill="#8e8f93" stroke="#1b1b1e" stroke-width="1"/>
</svg>
<div class="a lab" style="left:73px;top:362px;font-size:12px;">X</div>
<div class="a inp" style="left:86px;top:359px;width:34.5px;">0 px</div>
<div class="a stp" style="left:129.5px;top:359px;"><svg width="10" height="18" viewBox="0 0 10 18" style="display:block"><path d="M2.5 6.8 L5 4.3 L7.5 6.8 M2.5 11.2 L5 13.7 L7.5 11.2" fill="none" stroke="#2e2e32" stroke-width="1.1" stroke-linecap="round" stroke-linejoin="round"/></svg></div>
<div class="a lab" style="left:100.5px;width:80px;text-align:right;top:361.5px;">模糊度</div>
<div class="a inp" style="left:186px;top:359px;width:48.5px;">0 px</div>
<div class="a stp" style="left:243px;top:359px;"><svg width="10" height="18" viewBox="0 0 10 18" style="display:block"><path d="M2.5 6.8 L5 4.3 L7.5 6.8 M2.5 11.2 L5 13.7 L7.5 11.2" fill="none" stroke="#2e2e32" stroke-width="1.1" stroke-linecap="round" stroke-linejoin="round"/></svg></div>
<div class="a lab" style="left:73px;top:389px;font-size:12px;">Y</div>
<div class="a inp" style="left:86px;top:386px;width:34.5px;">0 px</div>
<div class="a stp" style="left:129.5px;top:386px;"><svg width="10" height="18" viewBox="0 0 10 18" style="display:block"><path d="M2.5 6.8 L5 4.3 L7.5 6.8 M2.5 11.2 L5 13.7 L7.5 11.2" fill="none" stroke="#2e2e32" stroke-width="1.1" stroke-linecap="round" stroke-linejoin="round"/></svg></div>
<div class="a lab" style="left:100.5px;width:80px;text-align:right;top:388.5px;">颜色</div>
<div class="a well" style="left:186px;top:386px;width:68px;height:19px;"><i></i></div>
<div class="a sep" style="top:418px;"></div>
<div class="a lab" style="left:16px;top:427px;">滤镜效果</div>
<div class="a lab" style="left:-1px;width:80px;text-align:right;top:452px;">模糊度</div>
<svg class="a" style="left:79.59999999999991px;top:447.6px" width="105.20000000000005" height="22" viewBox="0 0 105.20000000000005 22"><rect x="8" y="6.3" width="89.20000000000005" height="3.4" rx="1.7" fill="#57585d"/><path d="M12.9 14.4V18.2M28.7 14.4V18.2M44.5 14.4V18.2M60.3 14.4V18.2M76.1 14.4V18.2M91.9 14.4V18.2" stroke="#75767a" stroke-width="1" fill="none"/><path d="M7.200000000000091 5.2 Q7.200000000000091 4 8.400000000000091 4 H17.40000000000009 Q18.60000000000009 4 18.60000000000009 5.2 V10.3 L12.900000000000091 16 L7.200000000000091 10.3 Z" fill="#c4c5c9"/></svg>
<div class="a inp" style="left:186px;top:449px;width:48.5px;">0.00 px</div>
<div class="a stp" style="left:243px;top:449px;"><svg width="10" height="18" viewBox="0 0 10 18" style="display:block"><path d="M2.5 6.8 L5 4.3 L7.5 6.8 M2.5 11.2 L5 13.7 L7.5 11.2" fill="none" stroke="#2e2e32" stroke-width="1.1" stroke-linecap="round" stroke-linejoin="round"/></svg></div>
<div class="a lab" style="left:-1px;width:80px;text-align:right;top:479px;">棕褐色</div>
<svg class="a" style="left:79.59999999999991px;top:474.6px" width="105.20000000000005" height="22" viewBox="0 0 105.20000000000005 22"><rect x="8" y="6.3" width="89.20000000000005" height="3.4" rx="1.7" fill="#57585d"/><path d="M12.9 14.4V18.2M20.8 14.4V18.2M28.7 14.4V18.2M36.6 14.4V18.2M44.5 14.4V18.2M52.4 14.4V18.2M60.3 14.4V18.2M68.2 14.4V18.2M76.1 14.4V18.2M84.0 14.4V18.2M91.9 14.4V18.2" stroke="#75767a" stroke-width="1" fill="none"/><path d="M7.200000000000091 5.2 Q7.200000000000091 4 8.400000000000091 4 H17.40000000000009 Q18.60000000000009 4 18.60000000000009 5.2 V10.3 L12.900000000000091 16 L7.200000000000091 10.3 Z" fill="#c4c5c9"/></svg>
<div class="a inp" style="left:186px;top:476px;width:48.5px;">0%</div>
<div class="a stp" style="left:243px;top:476px;"><svg width="10" height="18" viewBox="0 0 10 18" style="display:block"><path d="M2.5 6.8 L5 4.3 L7.5 6.8 M2.5 11.2 L5 13.7 L7.5 11.2" fill="none" stroke="#2e2e32" stroke-width="1.1" stroke-linecap="round" stroke-linejoin="round"/></svg></div>
<div class="a lab" style="left:-1px;width:80px;text-align:right;top:506px;">饱和度</div>
<svg class="a" style="left:79.59999999999991px;top:501.6px" width="105.20000000000005" height="22" viewBox="0 0 105.20000000000005 22"><rect x="8" y="6.3" width="89.20000000000005" height="3.4" rx="1.7" fill="#57585d"/><path d="M12.9 14.4V18.2M20.8 14.4V18.2M28.7 14.4V18.2M36.6 14.4V18.2M44.5 14.4V18.2M52.4 14.4V18.2M60.3 14.4V18.2M68.2 14.4V18.2M76.1 14.4V18.2M84.0 14.4V18.2M91.9 14.4V18.2" stroke="#75767a" stroke-width="1" fill="none"/><path d="M46.70000000000009 5.2 Q46.70000000000009 4 47.90000000000009 4 H56.90000000000009 Q58.100000000000094 4 58.100000000000094 5.2 V10.3 L52.40000000000009 16 L46.70000000000009 10.3 Z" fill="#c4c5c9"/></svg>
<div class="a inp" style="left:186px;top:503px;width:48.5px;">1.0</div>
<div class="a stp" style="left:243px;top:503px;"><svg width="10" height="18" viewBox="0 0 10 18" style="display:block"><path d="M2.5 6.8 L5 4.3 L7.5 6.8 M2.5 11.2 L5 13.7 L7.5 11.2" fill="none" stroke="#2e2e32" stroke-width="1.1" stroke-linecap="round" stroke-linejoin="round"/></svg></div>
<div class="a lab" style="left:-1px;width:80px;text-align:right;top:533px;">色调</div>
<svg class="a" style="left:79.59999999999991px;top:528.6px" width="105.20000000000005" height="22" viewBox="0 0 105.20000000000005 22"><rect x="8" y="6.3" width="89.20000000000005" height="3.4" rx="1.7" fill="#57585d"/><path d="M12.9 14.4V18.2M19.5 14.4V18.2M26.1 14.4V18.2M32.7 14.4V18.2M39.2 14.4V18.2M45.8 14.4V18.2M52.4 14.4V18.2M59.0 14.4V18.2M65.6 14.4V18.2M72.2 14.4V18.2M78.7 14.4V18.2M85.3 14.4V18.2M91.9 14.4V18.2" stroke="#75767a" stroke-width="1" fill="none"/><path d="M7.200000000000091 5.2 Q7.200000000000091 4 8.400000000000091 4 H17.40000000000009 Q18.60000000000009 4 18.60000000000009 5.2 V10.3 L12.900000000000091 16 L7.200000000000091 10.3 Z" fill="#c4c5c9"/></svg>
<div class="a inp" style="left:186px;top:530px;width:48.5px;">0°</div>
<div class="a stp" style="left:243px;top:530px;"><svg width="10" height="18" viewBox="0 0 10 18" style="display:block"><path d="M2.5 6.8 L5 4.3 L7.5 6.8 M2.5 11.2 L5 13.7 L7.5 11.2" fill="none" stroke="#2e2e32" stroke-width="1.1" stroke-linecap="round" stroke-linejoin="round"/></svg></div>
<div class="a lab" style="left:-1px;width:80px;text-align:right;top:560px;">亮度</div>
<svg class="a" style="left:79.59999999999991px;top:555.6px" width="105.20000000000005" height="22" viewBox="0 0 105.20000000000005 22"><rect x="8" y="6.3" width="89.20000000000005" height="3.4" rx="1.7" fill="#57585d"/><path d="M12.9 14.4V18.2M22.8 14.4V18.2M32.7 14.4V18.2M42.5 14.4V18.2M52.4 14.4V18.2M62.3 14.4V18.2M72.2 14.4V18.2M82.0 14.4V18.2M91.9 14.4V18.2" stroke="#75767a" stroke-width="1" fill="none"/><path d="M27.20000000000009 5.2 Q27.20000000000009 4 28.40000000000009 4 H37.40000000000009 Q38.600000000000094 4 38.600000000000094 5.2 V10.3 L32.90000000000009 16 L27.20000000000009 10.3 Z" fill="#c4c5c9"/></svg>
<div class="a inp" style="left:186px;top:557px;width:48.5px;">100%</div>
<div class="a stp" style="left:243px;top:557px;"><svg width="10" height="18" viewBox="0 0 10 18" style="display:block"><path d="M2.5 6.8 L5 4.3 L7.5 6.8 M2.5 11.2 L5 13.7 L7.5 11.2" fill="none" stroke="#2e2e32" stroke-width="1.1" stroke-linecap="round" stroke-linejoin="round"/></svg></div>
<div class="a lab" style="left:-1px;width:80px;text-align:right;top:587px;">对比度</div>
<svg class="a" style="left:79.59999999999991px;top:582.6px" width="105.20000000000005" height="22" viewBox="0 0 105.20000000000005 22"><rect x="8" y="6.3" width="89.20000000000005" height="3.4" rx="1.7" fill="#57585d"/><path d="M12.9 14.4V18.2M20.8 14.4V18.2M28.7 14.4V18.2M36.6 14.4V18.2M44.5 14.4V18.2M52.4 14.4V18.2M60.3 14.4V18.2M68.2 14.4V18.2M76.1 14.4V18.2M84.0 14.4V18.2M91.9 14.4V18.2" stroke="#75767a" stroke-width="1" fill="none"/><path d="M46.70000000000009 5.2 Q46.70000000000009 4 47.90000000000009 4 H56.90000000000009 Q58.100000000000094 4 58.100000000000094 5.2 V10.3 L52.40000000000009 16 L46.70000000000009 10.3 Z" fill="#c4c5c9"/></svg>
<div class="a inp" style="left:186px;top:584px;width:48.5px;">1.0</div>
<div class="a stp" style="left:243px;top:584px;"><svg width="10" height="18" viewBox="0 0 10 18" style="display:block"><path d="M2.5 6.8 L5 4.3 L7.5 6.8 M2.5 11.2 L5 13.7 L7.5 11.2" fill="none" stroke="#2e2e32" stroke-width="1.1" stroke-linecap="round" stroke-linejoin="round"/></svg></div>
<div class="a sel" style="left:86px;top:610.3px;width:168px;height:18.5px;line-height:20.3px;text-align:center;letter-spacing:0.35px;font-size:10.5px;">将滤镜还原为默认设置</div>
<div class="a sep" style="top:641px;"></div>
<div class="a lab" style="left:16px;top:649px;">倒影</div>
</div>
</body>
</html>
